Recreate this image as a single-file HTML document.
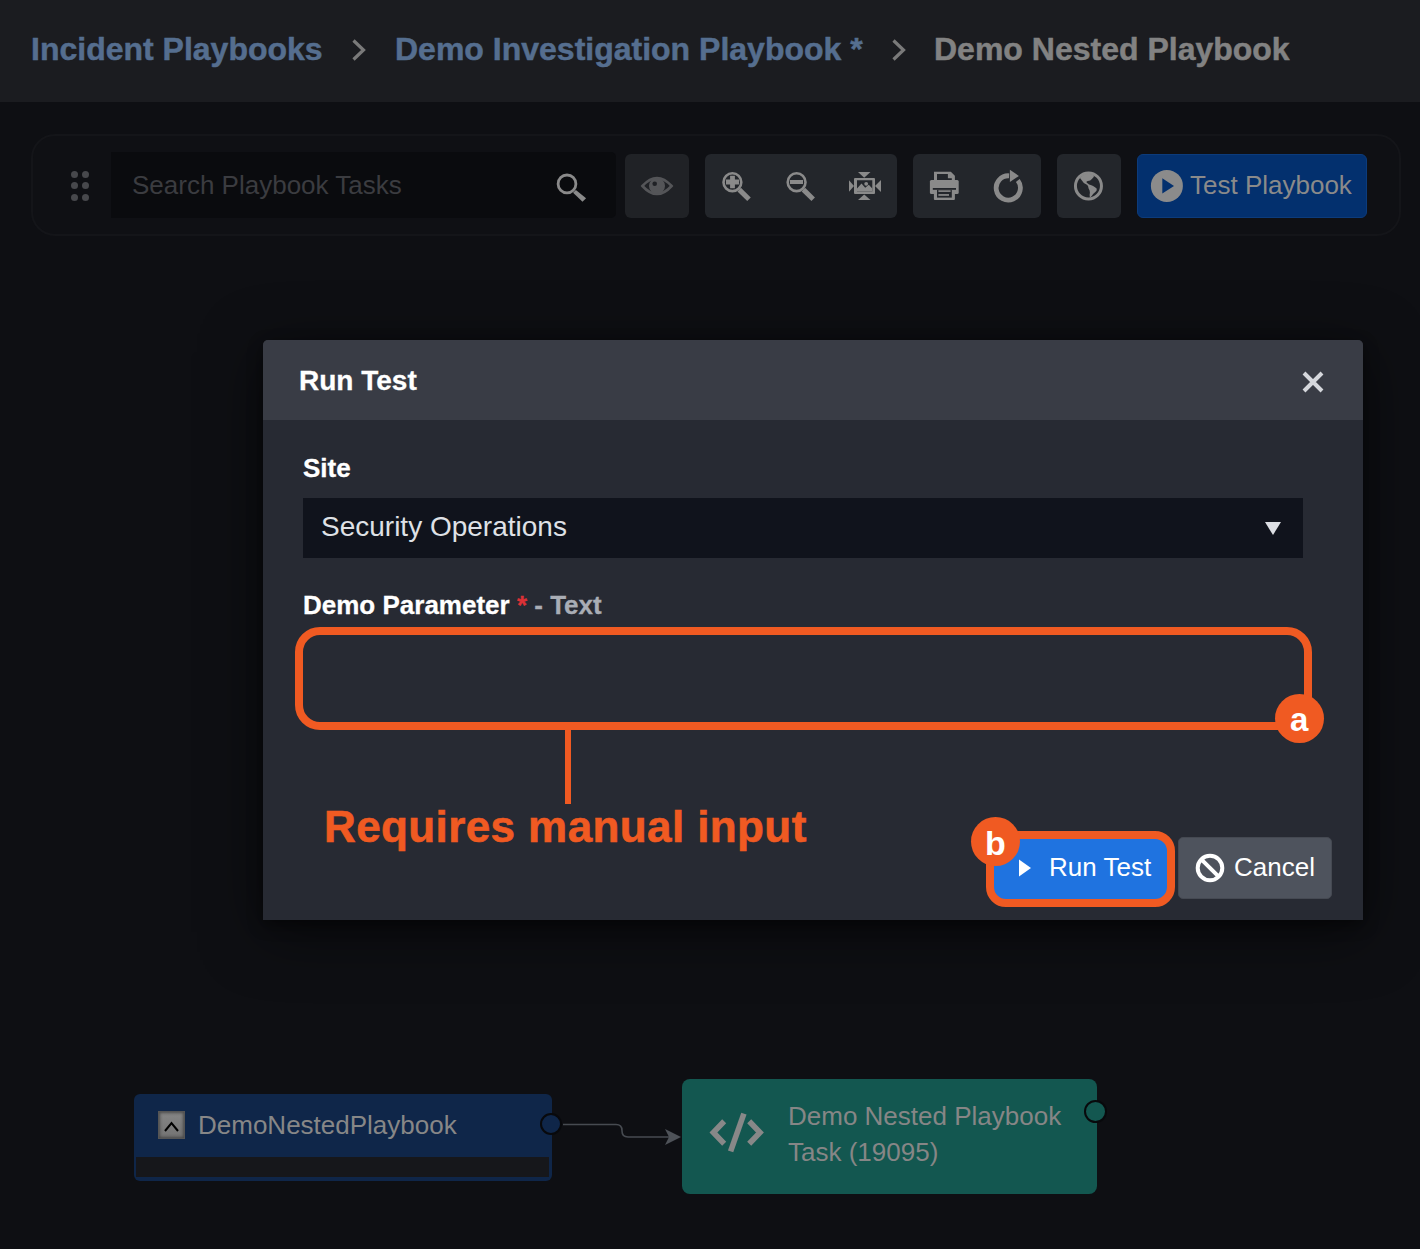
<!DOCTYPE html>
<html><head><meta charset="utf-8">
<style>
*{margin:0;padding:0;box-sizing:border-box;}
html,body{width:1420px;height:1249px;overflow:hidden;background:#0e0f13;font-family:"Liberation Sans",sans-serif;}
.a{position:absolute;}
.t{position:absolute;white-space:nowrap;line-height:1;}
#hdr{left:0;top:0;width:1420px;height:102px;background:#1b1c20;}
.bc{font-size:32px;font-weight:bold;color:#556e8f;-webkit-text-stroke:0.5px currentColor;}
.chev{color:#7a7a7a;}
#tb{left:31px;top:134px;width:1370px;height:102px;border:2px solid #141519;border-radius:24px;background:#0f1014;}
.dot{position:absolute;width:7px;height:7px;border-radius:50%;background:#47484c;}
#search{left:111px;top:152px;width:505px;height:66px;background:#0a0b0e;border-radius:0 5px 5px 0;}
.btn{position:absolute;top:154px;height:64px;background:#23262b;border-radius:6px;}
#modal{left:263px;top:340px;width:1100px;height:580px;background:#272a33;border-radius:5px 5px 0 0;overflow:hidden;box-shadow:0 5px 15px rgba(0,0,0,0.45),0 12px 60px rgba(0,0,0,0.5);}
#mhead{left:0;top:0;width:1100px;height:80px;background:#393c45;}
.lbl{font-size:26px;font-weight:bold;color:#ffffff;-webkit-text-stroke:0.3px currentColor;}
</style></head><body>

<!-- header -->
<div id="hdr" class="a"></div>
<div class="t bc" style="left:31px;top:33px;">Incident Playbooks</div>
<svg class="a" style="left:349px;top:38px" width="20" height="24" viewBox="0 0 20 24"><path d="M4.5 2.5 L14.5 12 L4.5 21.5" fill="none" stroke="#7a7a7a" stroke-width="3.2"/></svg>
<div class="t bc" style="left:395px;top:33px;">Demo Investigation Playbook *</div>
<svg class="a" style="left:889px;top:38px" width="20" height="24" viewBox="0 0 20 24"><path d="M4.5 2.5 L14.5 12 L4.5 21.5" fill="none" stroke="#7a7a7a" stroke-width="3.2"/></svg>
<div class="t bc" style="left:934px;top:33px;color:#828282;">Demo Nested Playbook</div>

<!-- toolbar -->
<div id="tb" class="a"></div>
<div class="dot" style="left:71px;top:171px"></div><div class="dot" style="left:82px;top:171px"></div>
<div class="dot" style="left:71px;top:182px"></div><div class="dot" style="left:82px;top:182px"></div>
<div class="dot" style="left:71px;top:194px"></div><div class="dot" style="left:82px;top:194px"></div>
<div id="search" class="a"></div>
<div class="t" style="left:132px;top:172px;font-size:26px;color:#3b3c40;">Search Playbook Tasks</div>
<svg class="a" style="left:552px;top:168px" width="40" height="40" viewBox="552 168 40 40"><circle cx="567" cy="183.9" r="8.9" fill="none" stroke="#8a8a8a" stroke-width="2.8"/><path d="M575.9 189.9 L586.1 198.2 L582.5 201.8 L573.1 192.7 Z" fill="#8a8a8a"/></svg>

<div class="btn" style="left:625px;width:64px;background:#202226;"></div>
<div class="btn" style="left:705px;width:192px;"></div>
<div class="btn" style="left:913px;width:128px;"></div>
<div class="btn" style="left:1057px;width:64px;"></div>
<div class="btn" style="left:1137px;width:230px;background:#03306e;border:1px solid #0c3b7b;"></div>
<div class="t" style="left:1190px;top:172px;font-size:26px;color:#8a8a8a;">Test Playbook</div>


<!-- toolbar icons -->
<svg class="a" style="left:630px;top:166px" width="54" height="40" viewBox="630 166 54 40">
 <path d="M642.4 186 Q657 170 671.6 186 Q657 202 642.4 186 Z" fill="none" stroke="#545558" stroke-width="2.6"/>
 <circle cx="657" cy="186" r="8" fill="#545558"/>
 <circle cx="654.7" cy="183.7" r="2.3" fill="#1f2125"/>
</svg>
<svg class="a" style="left:715px;top:164px" width="100" height="42" viewBox="715 164 100 42">
 <circle cx="732.4" cy="182.2" r="8.9" fill="none" stroke="#8a8a8a" stroke-width="2.6"/>
 <path d="M726 182 H739 M732.5 175.8 V188.2" stroke="#8a8a8a" stroke-width="4.8"/>
 <path d="M739.2 189.6 L749 199.2" stroke="#8a8a8a" stroke-width="5" stroke-linecap="butt"/>
 <circle cx="796.6" cy="182.2" r="8.9" fill="none" stroke="#8a8a8a" stroke-width="2.6"/>
 <path d="M790 182 H803" stroke="#8a8a8a" stroke-width="4"/>
 <path d="M803.4 189.6 L813.2 199.2" stroke="#8a8a8a" stroke-width="5" stroke-linecap="butt"/>
</svg>
<svg class="a" style="left:845px;top:168px" width="40" height="36" viewBox="845 168 40 36" fill="#8a8a8a">
 <path d="M858 172 H870.5 L864.2 177.8 Z"/>
 <path d="M858 200 H870.5 L864.2 194.4 Z"/>
 <path d="M849 180.3 L854 186 L849 191.7 Z"/>
 <path d="M881 180 L875 186 L881 192 Z"/>
 <path fill-rule="evenodd" d="M855 178 H874 Q875 178 875 179 V193 Q875 194 874 194 H855 Q854 194 854 193 V179 Q854 178 855 178 Z M857 180.3 V191.6 H872.3 V180.3 Z"/>
 <path d="M857 191.6 V188.5 L861.5 183.5 L865.2 187.8 L868.8 184.8 L872.3 188.5 V191.6 Z"/>
 <circle cx="866.2" cy="183.8" r="1.9"/>
</svg>
<svg class="a" style="left:926px;top:168px" width="36" height="36" viewBox="926 168 36 36">
 <path d="M934 171.8 H950.9 L954.9 175.8 V182.5 H934 Z" fill="#8a8a8a"/>
 <path d="M937 174 H947.9 V178.2 H951.8 V181.7 H937 Z" fill="#23262b"/>
 <rect x="929.9" y="180" width="28.8" height="14.1" rx="1.5" fill="#8a8a8a"/>
 <rect x="933.9" y="188" width="21" height="12.1" rx="1" fill="#8a8a8a"/>
 <rect x="932.8" y="188" width="23.2" height="1.8" fill="#23262b"/>
 <rect x="937" y="189.8" width="14.8" height="7.8" fill="#23262b"/>
 <rect x="938.4" y="190.3" width="12.2" height="1.6" fill="#8a8a8a"/>
 <rect x="938.4" y="194.1" width="10.6" height="1.7" fill="#8a8a8a"/>
</svg>
<svg class="a" style="left:990px;top:166px" width="38" height="40" viewBox="990 166 38 40">
 <path d="M1009.10 175.80 A12.1 12.1 0 1 0 1017.83 180.45" fill="none" stroke="#8a8a8a" stroke-width="4.8"/>
 <path d="M1009.9 169.7 L1018.9 175.9 L1009.9 182.1 Z" fill="#8a8a8a"/>
</svg>
<svg class="a" style="left:1070px;top:168px" width="38" height="36" viewBox="1070 168 38 36">
 <circle cx="1088.45" cy="185.9" r="13" fill="none" stroke="#8a8a8a" stroke-width="3"/>
 <path d="M1079.8 177.8 L1084 174.5 L1089 173.6 L1093.6 174.9 L1093.9 176.7 L1091.9 179 L1090.2 180.4 L1087.9 181 L1086.6 181.6 L1086.7 182.7 L1087.9 183.6 L1089 184.4 L1090.8 185 L1093.1 185.9 L1095.4 187.6 L1096.8 188.8 L1096.5 190.8 L1094.8 192.5 L1093.1 194 L1091.9 195.7 L1090.8 197.1 L1089.9 197.4 L1089.6 195.1 L1089.9 192.8 L1089.6 190.5 L1088.5 188.2 L1088.2 186.5 L1087.3 185 L1085.6 184.1 L1083.8 183 L1082.1 180.7 L1080.4 178.4 Z" fill="#8a8a8a"/>
</svg>
<svg class="a" style="left:1148px;top:168px" width="38" height="36" viewBox="1148 168 38 36">
 <circle cx="1166.9" cy="185.9" r="16" fill="#8b8b8b"/>
 <path d="M1162.3 178.3 L1174 185.9 L1162.3 193.4 Z" fill="#03306e"/>
</svg>

<!-- modal -->
<div id="modal" class="a">
  <div id="mhead" class="a"></div>
</div>
<div class="t" style="left:299px;top:367px;font-size:28px;font-weight:bold;color:#fff;-webkit-text-stroke:0.3px #fff;">Run Test</div>
<svg class="a" style="left:1300px;top:369px" width="26" height="26" viewBox="0 0 26 26"><path d="M4 4 L22 22 M22 4 L4 22" stroke="#d5d7dc" stroke-width="4"/></svg>

<div class="t lbl" style="left:303px;top:455px;">Site</div>
<div class="a" style="left:303px;top:498px;width:1000px;height:60px;background:#10131c;"></div>
<div class="t" style="left:321px;top:513px;font-size:28px;color:#dfe1e6;">Security Operations</div>
<svg class="a" style="left:1264px;top:521px" width="18" height="15" viewBox="0 0 18 15"><path d="M1 1 L17 1 L9 14 Z" fill="#dcdee3"/></svg>

<div class="t lbl" style="left:303px;top:592px;">Demo Parameter <span style="color:#dc3136">*</span> <span style="color:#a9adb5">- Text</span></div>


<!-- annotation a -->
<div class="a" style="left:295px;top:627px;width:1017px;height:103px;border:8px solid #f05a22;border-radius:25px;"></div>
<div class="a" style="left:565px;top:729px;width:6px;height:75px;background:#f05a22;"></div>
<div class="a" style="left:1275px;top:694px;width:49px;height:49px;border-radius:50%;background:#f05a22;"></div>
<div class="t" style="left:1290px;top:703px;font-size:33px;font-weight:bold;color:#fff;">a</div>
<div class="t" style="left:324px;top:805px;font-size:44px;font-weight:bold;color:#f05a22;letter-spacing:0.4px;-webkit-text-stroke:0.6px #f05a22;">Requires manual input</div>

<!-- buttons -->
<div class="a" style="left:986px;top:831px;width:189px;height:76px;border:8px solid #f05a22;border-radius:20px;background:#1f73e0;"></div>
<svg class="a" style="left:1017px;top:858px" width="16" height="20" viewBox="0 0 16 20"><path d="M2 1.5 L14 10 L2 18.5 Z" fill="#fff"/></svg>
<div class="t" style="left:1049px;top:854px;font-size:26px;color:#fff;">Run Test</div>
<div class="a" style="left:971px;top:817px;width:49px;height:49px;border-radius:50%;background:#f05a22;"></div>
<div class="t" style="left:985px;top:826px;font-size:34px;font-weight:bold;color:#fff;">b</div>

<div class="a" style="left:1178px;top:837px;width:154px;height:62px;background:#4e535d;border:1px solid #454952;border-radius:5px;"></div>
<svg class="a" style="left:1194px;top:852px" width="32" height="32" viewBox="0 0 32 32"><circle cx="16" cy="16" r="12.3" fill="none" stroke="#fff" stroke-width="4"/><path d="M7.3 7.3 L24.7 24.7" stroke="#fff" stroke-width="4"/></svg>
<div class="t" style="left:1234px;top:854px;font-size:26px;color:#fff;">Cancel</div>

<!-- nodes -->
<div class="a" style="left:134px;top:1094px;width:418px;height:87px;background:#0f2649;border-radius:6px;"></div>
<div class="a" style="left:136px;top:1157px;width:413px;height:20px;background:#16171b;"></div>
<div class="a" style="left:158px;top:1111px;width:27px;height:28px;background:linear-gradient(#868686,#737373);box-shadow:inset 0 0 0 1px #555, inset 0 0 3px 2px rgba(60,60,60,0.8);"></div>
<svg class="a" style="left:158px;top:1111px" width="27" height="28" viewBox="0 0 27 28"><path d="M7 20 L13.5 12 L20 20" fill="none" stroke="#000" stroke-width="2"/></svg>
<div class="t" style="left:198px;top:1112px;font-size:26px;color:#878787;">DemoNestedPlaybook</div>
<div class="a" style="left:540px;top:1113px;width:22px;height:22px;border-radius:50%;background:#0f2649;border:2px solid #08090c;"></div>

<svg class="a" style="left:560px;top:1110px" width="125" height="45" viewBox="0 0 125 45"><path d="M3 14.5 H56 Q62 14.5 62 20.5 V21 Q62 27 68 27 H110" fill="none" stroke="#474b51" stroke-width="1.6"/><path d="M105 19 L121 27 L105 35 L109 27 Z" fill="#4e5258"/></svg>

<div class="a" style="left:682px;top:1079px;width:415px;height:115px;background:#135750;border-radius:8px;"></div>
<svg class="a" style="left:700px;top:1105px" width="70" height="55" viewBox="700 1105 70 55">
 <path d="M724.2 1121.3 L713.4 1132.5 L724.2 1143.7 M749.2 1121.3 L760 1132.5 L749.2 1143.7" fill="none" stroke="#888" stroke-width="5.6" stroke-linecap="butt" stroke-linejoin="miter" stroke-miterlimit="4"/>
 <path d="M743.9 1113.6 L730.6 1151.4" stroke="#888" stroke-width="5.6" stroke-linecap="butt"/>
</svg>
<div class="t" style="left:788px;top:1098px;font-size:26px;color:#868686;line-height:36px;">Demo Nested Playbook<br>Task (19095)</div>
<div class="a" style="left:1084px;top:1100px;width:23px;height:23px;border-radius:50%;background:#135750;border:2px solid #08090c;"></div>

</body></html>
